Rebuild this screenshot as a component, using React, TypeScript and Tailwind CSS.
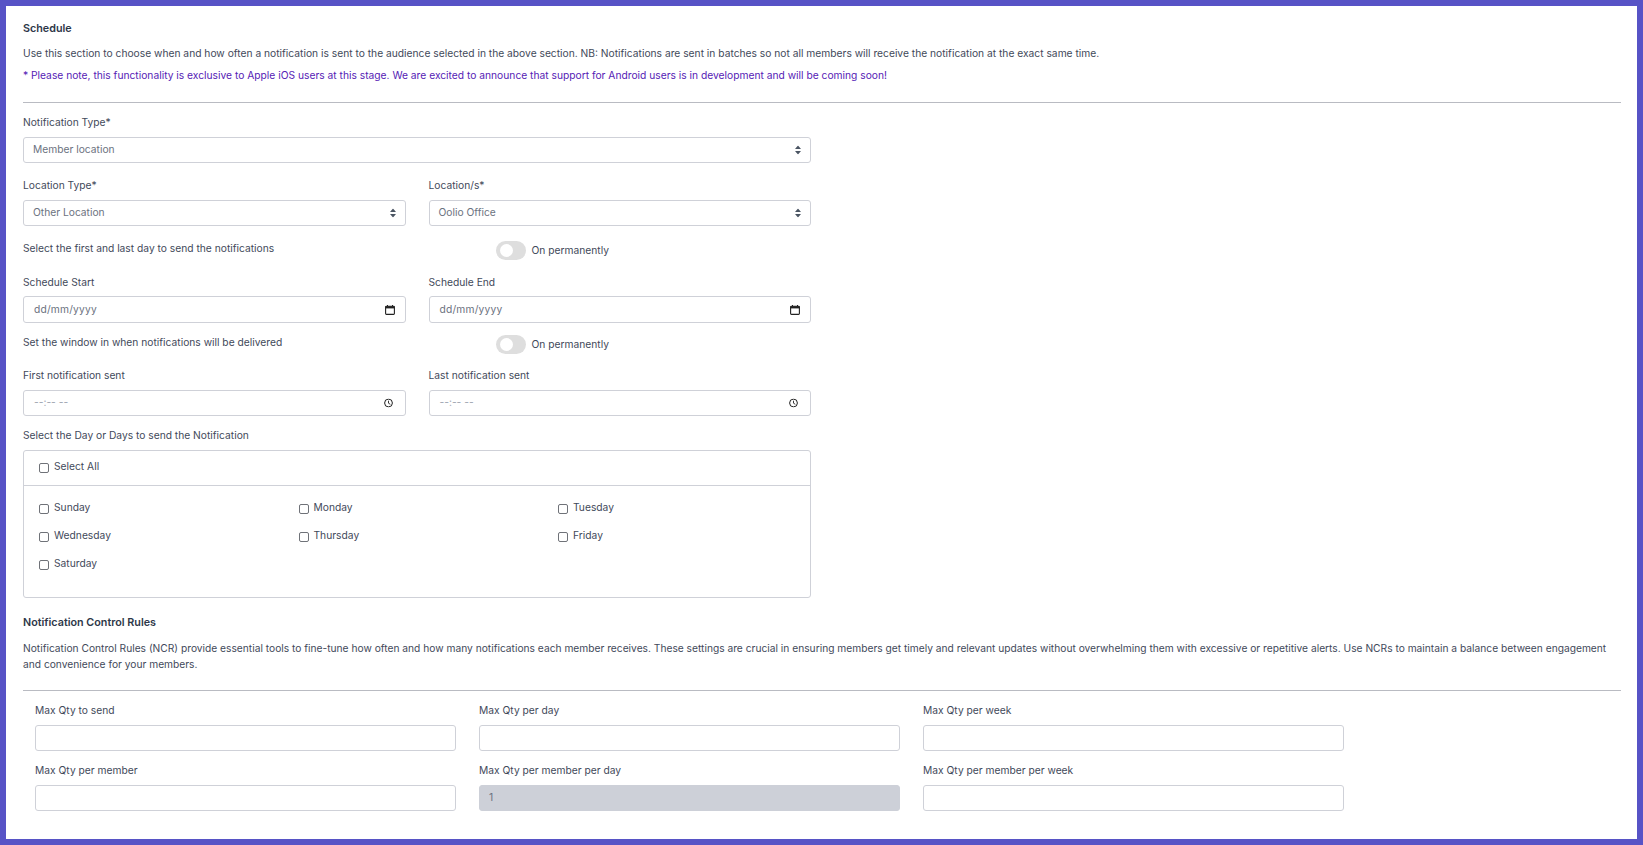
import React from 'react';

const DAYS = ['Sunday', 'Monday', 'Tuesday', 'Wednesday', 'Thursday', 'Friday', 'Saturday'];

function Chevrons() {
  return (
    <svg width="6" height="9" viewBox="0 0 6 9" className="absolute right-[9px] top-1/2 -translate-y-1/2">
      <path d="M3 0 L6 3.6 H0 Z M3 9 L0 5.4 H6 Z" fill="#4b5563" />
    </svg>
  );
}

function CalendarIcon() {
  return (
    <svg width="10" height="10" viewBox="0 0 10 10" className="absolute right-[10px] top-1/2 -translate-y-1/2">
      <path d="M2.5 0 V1.5 M7.5 0 V1.5" stroke="#222" strokeWidth="1" />
      <rect x="0.6" y="1.2" width="8.8" height="8.2" rx="0.8" fill="none" stroke="#222" strokeWidth="1.1" />
      <rect x="0.6" y="1.2" width="8.8" height="2.2" fill="#222" />
    </svg>
  );
}

function ClockIcon() {
  return (
    <svg width="9" height="9" viewBox="0 0 9 9" className="absolute right-[12px] top-1/2 -translate-y-1/2">
      <circle cx="4.5" cy="4.5" r="3.9" fill="none" stroke="#222" strokeWidth="1" />
      <path d="M4.5 2.2 V4.7 L6.3 5.8" fill="none" stroke="#222" strokeWidth="0.9" />
    </svg>
  );
}

function Box({ children, tall, disabled }: { children?: React.ReactNode; tall?: boolean; disabled?: boolean }) {
  return (
    <div
      className={`relative ${tall ? 'h-[27px]' : 'h-[26px]'} rounded-[3px] border flex items-center px-[9px] text-[#6b7280] ${
        disabled ? 'bg-[#cdd0d8] border-[#cdd0d8]' : 'bg-white border-[#cfd1d8]'
      }`}
    >
      {children}
    </div>
  );
}

function Field({ label, tight, children }: { label: string; tight?: boolean; children: React.ReactNode }) {
  return (
    <div>
      <label className={`block h-[16px] leading-[16px] ${tight ? 'mb-[6px]' : 'mb-[7px]'}`}>{label}</label>
      {children}
    </div>
  );
}

function Toggle() {
  return (
    <div className="flex items-center gap-[6px] pt-[1px]">
      <div className="w-[30px] h-[19px] rounded-full bg-[#dedede] flex items-center pl-[4px]">
        <div className="w-[13px] h-[13px] rounded-full bg-white" />
      </div>
      <span>On permanently</span>
    </div>
  );
}

function Day({ name }: { name: string }) {
  return (
    <label className="flex items-center gap-[5px] h-[16px]">
      <span className="w-[10px] h-[10px] mt-[2px] rounded-[2px] border border-[#6f7278] bg-white" />
      <span>{name}</span>
    </label>
  );
}

function QtyInput({ label, value }: { label: string; value?: string }) {
  return (
    <Field label={label}>
      <Box disabled={!!value}>{value}</Box>
    </Field>
  );
}

export default function App() {
  return (
    <div className="font-['Inter',sans-serif] h-[845px] overflow-hidden border-[6px] border-[#5753c6] bg-white pl-[17px] pr-[16px] pt-[14px] text-[10.25px] text-[#3f495a]">
      <h2 className="h-[16px] leading-[18px] text-[10.75px] font-semibold text-[#2d3748]">Schedule</h2>
      <p className="mt-[9px] h-[16px] leading-[16px]">
        Use this section to choose when and how often a notification is sent to the audience selected in the above section. NB: Notifications are sent in batches so not all members will receive the notification at the exact same time.
      </p>
      <p className="mt-[6px] h-[16px] leading-[16px] text-[#5521b5]">
        * Please note, this functionality is exclusive to Apple iOS users at this stage. We are excited to announce that support for Android users is in development and will be coming soon!
      </p>
      <hr className="mt-[19px] border-[#b9bbc2]" />

      <div className="w-[788px]">
        <div className="mt-[11px]">
          <Field label="Notification Type*">
            <Box>Member location<Chevrons /></Box>
          </Field>
        </div>

        <div className="mt-[14px] grid grid-cols-2 gap-x-[23px]">
          <Field label="Location Type*">
            <Box>Other Location<Chevrons /></Box>
          </Field>
          <Field label="Location/s*">
            <Box>Oolio Office<Chevrons /></Box>
          </Field>
        </div>

        <div className="mt-[14px] grid grid-cols-2 gap-x-[23px] h-[21px]">
          <span className="leading-[16px]">Select the first and last day to send the notifications</span>
          <div className="pl-[67px]"><Toggle /></div>
        </div>

        <div className="mt-[13px] grid grid-cols-2 gap-x-[23px]">
          <Field label="Schedule Start" tight>
            <Box tall><span className="ml-[1px] tracking-[0.2px]">dd/mm/yyyy</span><CalendarIcon /></Box>
          </Field>
          <Field label="Schedule End" tight>
            <Box tall><span className="ml-[1px] tracking-[0.2px]">dd/mm/yyyy</span><CalendarIcon /></Box>
          </Field>
        </div>

        <div className="mt-[11px] grid grid-cols-2 gap-x-[23px] h-[21px]">
          <span className="leading-[16px]">Set the window in when notifications will be delivered</span>
          <div className="pl-[67px]"><Toggle /></div>
        </div>

        <div className="mt-[12px] grid grid-cols-2 gap-x-[23px]">
          <Field label="First notification sent">
            <Box><span className="ml-[1px] text-[#9ca3af]">--:-- --</span><ClockIcon /></Box>
          </Field>
          <Field label="Last notification sent">
            <Box><span className="ml-[1px] text-[#9ca3af]">--:-- --</span><ClockIcon /></Box>
          </Field>
        </div>

        <div className="mt-[11px]">
          <Field label="Select the Day or Days to send the Notification">
            <div className="h-[148px] rounded-[3px] border border-[#cfd1d8]">
              <div className="h-[35px] border-b border-[#cfd1d8] pl-[15px] pt-[8px]">
                <Day name="Select All" />
              </div>
              <div className="grid grid-cols-[259.5px_259.5px_1fr] pl-[15px] pt-[14px] gap-y-[12px]">
                {DAYS.map((d) => (
                  <Day key={d} name={d} />
                ))}
              </div>
            </div>
          </Field>
        </div>
      </div>

      <h2 className="mt-[16px] h-[16px] leading-[18px] text-[10.75px] font-semibold text-[#2d3748]">Notification Control Rules</h2>
      <p className="mt-[11px] leading-[15.5px] text-[10.22px]">
        Notification Control Rules (NCR) provide essential tools to fine-tune how often and how many notifications each member receives. These settings are crucial in ensuring members get timely and relevant updates without overwhelming them with excessive or repetitive alerts. Use NCRs to maintain a balance between engagement and convenience for your members.
      </p>
      <hr className="mt-[18px] border-[#b9bbc2]" />

      <div className="mt-[11px] ml-[12px] w-[1309px] grid grid-cols-3 gap-x-[23px] gap-y-[11px]">
        <QtyInput label="Max Qty to send" />
        <QtyInput label="Max Qty per day" />
        <QtyInput label="Max Qty per week" />
        <QtyInput label="Max Qty per member" />
        <QtyInput label="Max Qty per member per day" value="1" />
        <QtyInput label="Max Qty per member per week" />
      </div>
    </div>
  );
}
